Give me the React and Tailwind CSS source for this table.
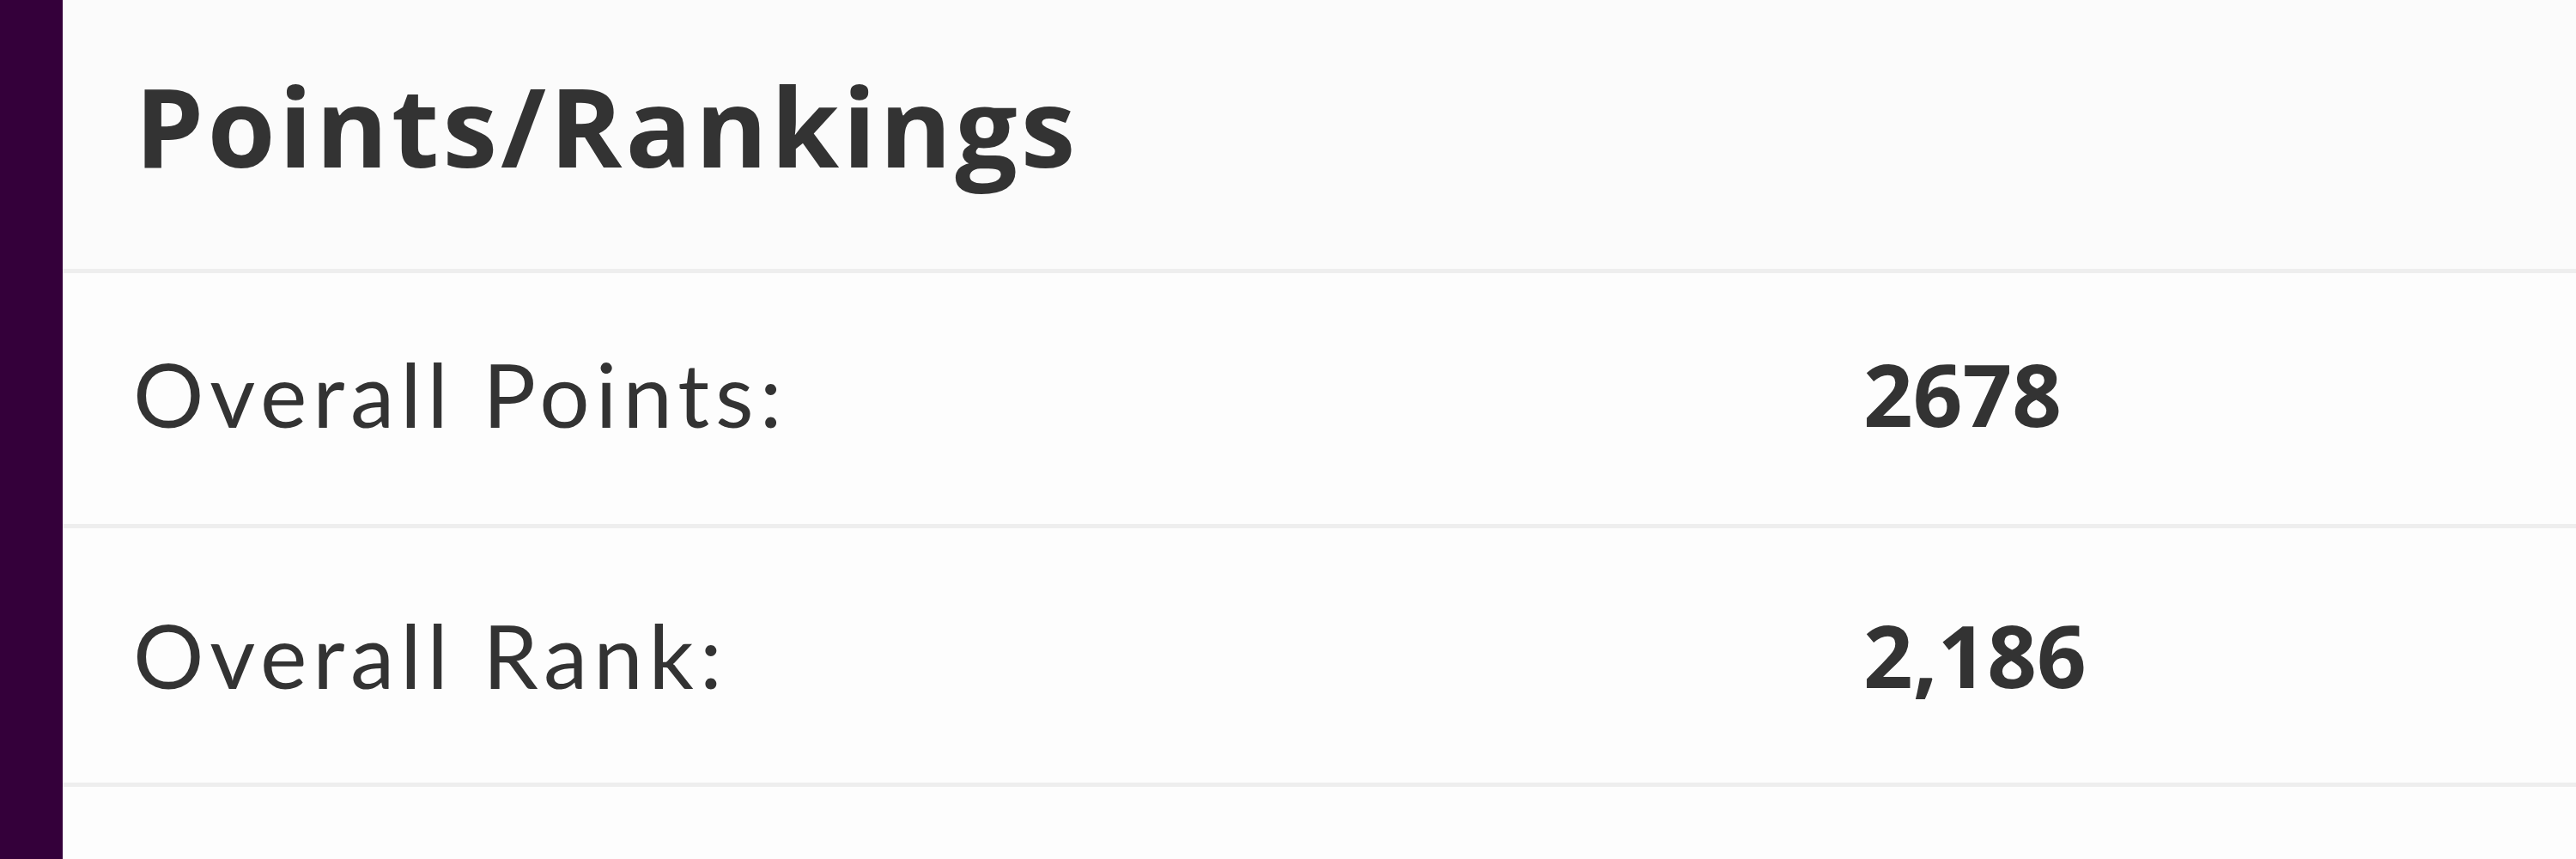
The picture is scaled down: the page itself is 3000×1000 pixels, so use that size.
import React from 'react';

const stats = [
    { label: 'Overall Points:', value: '2678', rowClass: 'h-[297px] pb-[12px]' },
    { label: 'Overall Rank:', value: '2,186', rowClass: 'h-[301px] pb-[2px]' },
];

const App = () => {
    return (
        <div className="flex h-[1000px] w-[3000px] overflow-hidden bg-[#fdfdfd] text-[#333333]">
            <div className="w-[73px] shrink-0 bg-[#34003a]"></div>
            <div className="flex-1 flex flex-col">
                <div className="h-[318px] pt-[82px] pl-[84px] border-b-[5px] border-[#eeeeee] bg-[#fbfbfb]">
                    <h1 className="text-[128px] font-bold leading-none tracking-[4px]" style={{ fontFamily: '"Open Sans", sans-serif' }}>Points/Rankings</h1>
                </div>
                {stats.map((row, index) => (
                    <div key={index} className={`${row.rowClass} grid grid-cols-[2097px_1fr] items-center border-b-[5px] border-[#eeeeee]`}>
                        <div className="pl-[82px] text-[103px] font-normal leading-none tracking-[7px]" style={{ fontFamily: 'Lato, sans-serif' }}>{row.label}</div>
                        <div className="text-[101px] font-bold leading-none" style={{ fontFamily: '"Open Sans", sans-serif' }}>{row.value}</div>
                    </div>
                ))}
            </div>
        </div>
    );
};

export default App;
